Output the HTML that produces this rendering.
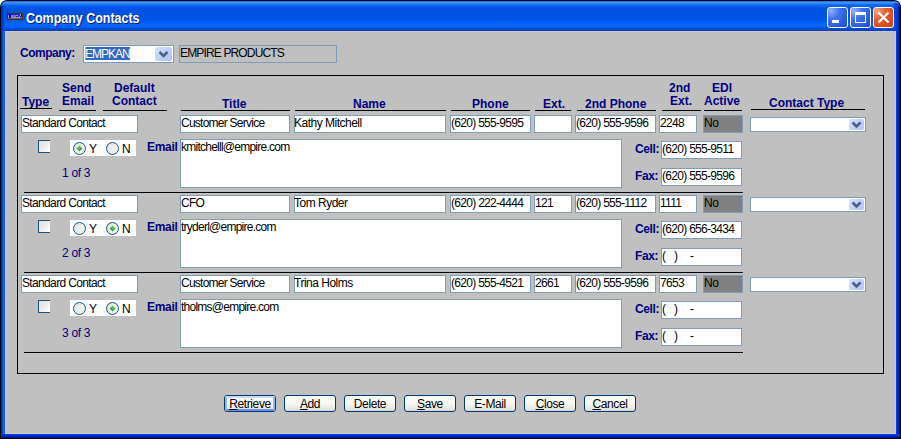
<!DOCTYPE html><html><head><meta charset="utf-8"><style>
html,body{margin:0;padding:0;width:901px;height:439px;overflow:hidden;background:#fff;}
body div, body svg{position:absolute;}
.t{white-space:pre;font-family:'Liberation Sans', sans-serif;}
</style></head><body>
<div style="left:0;top:0;width:901px;height:439px;background:#000;border-radius:7px 7px 0 0;"></div>
<div style="left:1px;top:1px;width:899px;height:437px;background:linear-gradient(90deg,#0A1CD8 0px,#0A1CD8 1px,#0840DC 1px,#0840DC 2px,#1868E8 2px,#1868E8 3px,#0452D8 3px,#0452D8 4px,#0A5AEE 4px,#0A5AEE 895px,#0040F0 895px,#0040F0 896px,#0030D0 896px,#0030D0 897px,#0020A8 897px,#0020A8 898px,#001890 898px);border-radius:6px 6px 0 0;"></div>
<div style="left:1px;top:434px;width:899px;height:4px;background:linear-gradient(180deg,#0040F0 0px,#0040F0 1px,#0030D8 1px,#0030D8 2px,#0020B0 2px,#0020B0 3px,#001890 3px);"></div>
<div style="left:1px;top:434px;width:4px;height:4px;background:linear-gradient(180deg,#0838E0,#0020B0 50%,#001890);"></div>
<div style="left:1px;top:1px;width:899px;height:30px;border-radius:6px 6px 0 0;background:linear-gradient(180deg,#0058EE 0px,#3D95FF 1px,#3A8FFF 2px,#0A68F4 4px,#0054E3 7px,#0052E0 14px,#0058EA 19px,#0066FF 23px,#0061F8 26px,#0048D0 28px,#003CC0 30px);"></div>
<div style="left:1px;top:6px;width:4px;height:25px;background:linear-gradient(90deg,#0820E0 0px,#0820E0 1px,#0038E0 1px,#0038E0 2px,#0048E0 2px,#0048E0 3px,#0050E4 3px);"></div>
<div style="left:894px;top:3px;width:6px;height:28px;background:linear-gradient(90deg,rgba(0,64,228,0.5) 0px,#0038E0 4px,#0028B0 4px,#0028B0 5px,#001890 5px);border-top-right-radius:5px;"></div>
<div style="left:5px;top:31px;width:889px;height:401px;border:1px solid #CEC8BA;background:#C0C0C0"></div>
<svg style="left:7px;top:13px" width="16" height="7" shape-rendering="crispEdges"><rect x="0" y="0" width="16" height="7" fill="#3A3226"/><rect x="1" y="1" width="14" height="5" fill="#A09A8A"/><rect x="1" y="5" width="14" height="1" fill="#6A6456"/><rect x="1" y="1" width="4" height="1" fill="#0000F8"/><rect x="2" y="1" width="2" height="4" fill="#0000F8"/><rect x="5" y="1" width="3" height="1" fill="#2828F0"/><rect x="5" y="2" width="4" height="2" fill="#6868F0"/><rect x="8" y="1" width="3" height="1" fill="#2020F0"/><rect x="9" y="3" width="3" height="1" fill="#2020E8"/><rect x="11" y="1" width="2" height="2" fill="#2020F0"/><rect x="14" y="1" width="1" height="3" fill="#0000F8"/><rect x="13" y="3" width="1" height="2" fill="#2828E8"/></svg>
<div class="t" style="left:27px;top:12px;font-size:14px;line-height:14px;font-weight:bold;color:#0A1E80;transform:scaleX(0.89);transform-origin:0 0;">Company Contacts</div>
<div class="t" style="left:26px;top:11px;font-size:14px;line-height:14px;font-weight:bold;color:#fff;transform:scaleX(0.89);transform-origin:0 0;">Company Contacts</div>
<div style="left:827px;top:7px;width:19px;height:19px;border:1px solid #fff;border-radius:3px;background:radial-gradient(circle at 15% 15%,#90B0FA 0%,#4474EE 35%,#2A5CE6 70%,#1E4AD8 100%);"></div>
<div style="left:850px;top:7px;width:19px;height:19px;border:1px solid #fff;border-radius:3px;background:radial-gradient(circle at 15% 15%,#90B0FA 0%,#4474EE 35%,#2A5CE6 70%,#1E4AD8 100%);"></div>
<div style="left:873px;top:7px;width:19px;height:19px;border:1px solid #fff;border-radius:3px;background:radial-gradient(circle at 15% 15%,#F2A488 0%,#E25E34 40%,#D8491C 75%,#C83A10 100%);"></div>
<div style="left:832px;top:20px;width:7px;height:3px;background:#fff"></div>
<div style="left:855px;top:12px;width:9px;height:7px;border:1px solid #fff;border-top:3px solid #fff;background:transparent"></div>
<svg style="left:873px;top:7px" width="21" height="21"><path d="M5.5,5.5 L15.5,15.5 M15.5,5.5 L5.5,15.5" stroke="#fff" stroke-width="2.2"/></svg>
<div class="t" style="left:20px;top:47px;font-size:12px;line-height:12px;font-weight:bold;color:#000080;letter-spacing:-0.5px;">Company:</div>
<div style="left:83px;top:45px;width:89px;height:16px;border:1px solid #7F9DB9;background:#fff"></div>
<div style="left:85px;top:47px;width:1px;height:13px;background:#E0A030"></div>
<div style="left:86px;top:47px;width:44px;height:13px;background:#316AC5"></div>
<div class="t" style="left:85px;top:48px;font-size:12px;line-height:12px;font-weight:normal;color:#fff;letter-spacing:-1.0px;">EMPKAN</div>
<div style="left:155px;top:47px;width:17px;height:14px;border-radius:2px;background:linear-gradient(135deg,#D4E2FD 0%,#BDD0F9 55%,#AFC5F6 100%);"></div>
<svg style="left:155px;top:47px" width="17" height="14"><path d="M4.5,5.0 L8.5,9.0 L12.5,5.0" fill="none" stroke="#4D6185" stroke-width="2.6"/></svg>
<div style="left:179px;top:45px;width:156px;height:16px;border:1px solid #7F9DB9;background:#C0C0C0"></div>
<div class="t" style="left:180px;top:47px;font-size:12px;line-height:12px;font-weight:normal;color:#000;letter-spacing:-0.85px;">EMPIRE PRODUCTS</div>
<div style="left:17px;top:75px;width:865px;height:297px;border:1px solid #000"></div>
<div class="t" style="left:22px;top:96px;font-size:12px;line-height:12px;font-weight:bold;color:#000080;letter-spacing:0px;">Type</div>
<div style="left:20px;top:108px;width:32px;height:1px;background:#000"></div>
<div class="t" style="left:62px;top:82px;font-size:12px;line-height:12px;font-weight:bold;color:#000080;letter-spacing:0px;">Send</div>
<div class="t" style="left:62px;top:95px;font-size:12px;line-height:12px;font-weight:bold;color:#000080;letter-spacing:0px;">Email</div>
<div style="left:59px;top:110px;width:37px;height:1px;background:#000"></div>
<div class="t" style="left:114px;top:82px;font-size:12px;line-height:12px;font-weight:bold;color:#000080;letter-spacing:0px;">Default</div>
<div class="t" style="left:112px;top:95px;font-size:12px;line-height:12px;font-weight:bold;color:#000080;letter-spacing:0px;">Contact</div>
<div style="left:103px;top:110px;width:64px;height:1px;background:#000"></div>
<div class="t" style="left:222px;top:98px;font-size:12px;line-height:12px;font-weight:bold;color:#000080;letter-spacing:0px;">Title</div>
<div style="left:181px;top:110px;width:109px;height:1px;background:#000"></div>
<div class="t" style="left:353px;top:98px;font-size:12px;line-height:12px;font-weight:bold;color:#000080;letter-spacing:0px;">Name</div>
<div style="left:295px;top:110px;width:151px;height:1px;background:#000"></div>
<div class="t" style="left:472px;top:98px;font-size:12px;line-height:12px;font-weight:bold;color:#000080;letter-spacing:0px;">Phone</div>
<div style="left:451px;top:110px;width:79px;height:1px;background:#000"></div>
<div class="t" style="left:543px;top:98px;font-size:12px;line-height:12px;font-weight:bold;color:#000080;letter-spacing:0px;">Ext.</div>
<div style="left:535px;top:110px;width:36px;height:1px;background:#000"></div>
<div class="t" style="left:585px;top:98px;font-size:12px;line-height:12px;font-weight:bold;color:#000080;letter-spacing:0px;">2nd Phone</div>
<div style="left:577px;top:110px;width:79px;height:1px;background:#000"></div>
<div class="t" style="left:669px;top:82px;font-size:12px;line-height:12px;font-weight:bold;color:#000080;letter-spacing:0px;">2nd</div>
<div class="t" style="left:670px;top:95px;font-size:12px;line-height:12px;font-weight:bold;color:#000080;letter-spacing:0px;">Ext.</div>
<div style="left:662px;top:110px;width:39px;height:1px;background:#000"></div>
<div class="t" style="left:712px;top:82px;font-size:12px;line-height:12px;font-weight:bold;color:#000080;letter-spacing:0px;">EDI</div>
<div class="t" style="left:704px;top:95px;font-size:12px;line-height:12px;font-weight:bold;color:#000080;letter-spacing:0px;">Active</div>
<div style="left:704px;top:110px;width:38px;height:1px;background:#000"></div>
<div class="t" style="left:769px;top:97px;font-size:12px;line-height:12px;font-weight:bold;color:#000080;letter-spacing:0px;">Contact Type</div>
<div style="left:751px;top:109px;width:114px;height:1px;background:#000"></div>
<div style="left:21px;top:115px;width:115px;height:16px;border:1px solid #7F9DB9;background:#fff"></div>
<div class="t" style="left:22px;top:117px;font-size:12px;line-height:12px;font-weight:normal;color:#000;letter-spacing:-0.65px;">Standard Contact</div>
<div style="left:180px;top:115px;width:108px;height:16px;border:1px solid #7F9DB9;background:#fff"></div>
<div class="t" style="left:181px;top:117px;font-size:12px;line-height:12px;font-weight:normal;color:#000;letter-spacing:-0.75px;">Customer Service</div>
<div style="left:294px;top:115px;width:150px;height:16px;border:1px solid #7F9DB9;background:#fff"></div>
<div class="t" style="left:294px;top:117px;font-size:12px;line-height:12px;font-weight:normal;color:#000;letter-spacing:-0.5px;">Kathy Mitchell</div>
<div style="left:450px;top:115px;width:79px;height:16px;border:1px solid #7F9DB9;background:#fff"></div>
<div class="t" style="left:451px;top:117px;font-size:12px;line-height:12px;font-weight:normal;color:#000;letter-spacing:-0.7px;">(620) 555-9595</div>
<div style="left:534px;top:115px;width:36px;height:16px;border:1px solid #7F9DB9;background:#fff"></div>
<div class="t" style="left:535px;top:117px;font-size:12px;line-height:12px;font-weight:normal;color:#000;letter-spacing:-0.7px;"></div>
<div style="left:575px;top:115px;width:79px;height:16px;border:1px solid #7F9DB9;background:#fff"></div>
<div class="t" style="left:576px;top:117px;font-size:12px;line-height:12px;font-weight:normal;color:#000;letter-spacing:-0.7px;">(620) 555-9596</div>
<div style="left:659px;top:115px;width:36px;height:16px;border:1px solid #7F9DB9;background:#fff"></div>
<div class="t" style="left:660px;top:117px;font-size:12px;line-height:12px;font-weight:normal;color:#000;letter-spacing:-0.7px;">2248</div>
<div style="left:703px;top:115px;width:38px;height:16px;border:1px solid #7F9DB9;background:#808080"></div>
<div class="t" style="left:704px;top:117px;font-size:12px;line-height:12px;font-weight:normal;color:#000;letter-spacing:-0.3px;">No</div>
<div style="left:750px;top:117px;width:114px;height:13px;border:1px solid #7F9DB9;background:#fff"></div>
<div style="left:849px;top:119px;width:15px;height:11px;border-radius:2px;background:linear-gradient(135deg,#D4E2FD 0%,#BDD0F9 55%,#AFC5F6 100%);"></div>
<svg style="left:849px;top:119px" width="15" height="11"><path d="M3.5,3.5 L7.5,7.5 L11.5,3.5" fill="none" stroke="#4D6185" stroke-width="2.6"/></svg>
<div style="left:38px;top:140px;width:11px;height:11px;border:1px solid #1C5180;border-right:none;background:linear-gradient(135deg,#DCDCD7,#FFFFFF);"></div>
<div style="left:70px;top:140px;width:66px;height:16px;background:#fff"></div>
<div style="left:73px;top:142px;width:11px;height:11px;border:1px solid #1C5180;border-radius:50%;background:linear-gradient(135deg,#DCDCD7,#FFFFFF);"></div>
<svg style="left:73px;top:142px" width="13" height="13"><path d="M6.5,3.7 L9.3,6.5 L6.5,9.3 L3.7,6.5 Z" fill="#21A421"/><path d="M6.5,4.6 L8,6.1 L6.5,7.6 L5,6.1Z" fill="#5CD85C"/></svg>
<div class="t" style="left:89px;top:143px;font-size:12px;line-height:12px;font-weight:normal;color:#000;letter-spacing:0px;">Y</div>
<div style="left:106px;top:142px;width:11px;height:11px;border:1px solid #1C5180;border-radius:50%;background:linear-gradient(135deg,#DCDCD7,#FFFFFF);"></div>
<div class="t" style="left:122px;top:143px;font-size:12px;line-height:12px;font-weight:normal;color:#000;letter-spacing:0px;">N</div>
<div class="t" style="left:147px;top:141px;font-size:12px;line-height:12px;font-weight:bold;color:#000080;letter-spacing:-0.3px;">Email</div>
<div style="left:180px;top:139px;width:440px;height:47px;border:1px solid #7F9DB9;background:#fff"></div>
<div class="t" style="left:181px;top:141px;font-size:12px;line-height:12px;font-weight:normal;color:#000;letter-spacing:-0.75px;">kmitchelll@empire.com</div>
<div class="t" style="left:62px;top:167px;font-size:12px;line-height:12px;font-weight:normal;color:#000080;letter-spacing:-0.3px;">1 of 3</div>
<div class="t" style="left:635px;top:143px;font-size:12px;line-height:12px;font-weight:bold;color:#000080;letter-spacing:-0.4px;">Cell:</div>
<div style="left:661px;top:141px;width:79px;height:16px;border:1px solid #7F9DB9;background:#fff"></div>
<div class="t" style="left:662px;top:143px;font-size:12px;line-height:12px;font-weight:normal;color:#000;letter-spacing:-0.7px;">(620) 555-9511</div>
<div class="t" style="left:635px;top:170px;font-size:12px;line-height:12px;font-weight:bold;color:#000080;letter-spacing:-0.4px;">Fax:</div>
<div style="left:661px;top:168px;width:79px;height:16px;border:1px solid #7F9DB9;background:#fff"></div>
<div class="t" style="left:662px;top:170px;font-size:12px;line-height:12px;font-weight:normal;color:#000;letter-spacing:-0.7px;">(620) 555-9596</div>
<div style="left:24px;top:192px;width:719px;height:1px;background:#000"></div>
<div style="left:21px;top:195px;width:115px;height:16px;border:1px solid #7F9DB9;background:#fff"></div>
<div class="t" style="left:22px;top:197px;font-size:12px;line-height:12px;font-weight:normal;color:#000;letter-spacing:-0.65px;">Standard Contact</div>
<div style="left:180px;top:195px;width:108px;height:16px;border:1px solid #7F9DB9;background:#fff"></div>
<div class="t" style="left:181px;top:197px;font-size:12px;line-height:12px;font-weight:normal;color:#000;letter-spacing:-0.75px;">CFO</div>
<div style="left:294px;top:195px;width:150px;height:16px;border:1px solid #7F9DB9;background:#fff"></div>
<div class="t" style="left:294px;top:197px;font-size:12px;line-height:12px;font-weight:normal;color:#000;letter-spacing:-0.5px;">Tom Ryder</div>
<div style="left:450px;top:195px;width:79px;height:16px;border:1px solid #7F9DB9;background:#fff"></div>
<div class="t" style="left:451px;top:197px;font-size:12px;line-height:12px;font-weight:normal;color:#000;letter-spacing:-0.7px;">(620) 222-4444</div>
<div style="left:534px;top:195px;width:36px;height:16px;border:1px solid #7F9DB9;background:#fff"></div>
<div class="t" style="left:535px;top:197px;font-size:12px;line-height:12px;font-weight:normal;color:#000;letter-spacing:-0.7px;">121</div>
<div style="left:575px;top:195px;width:79px;height:16px;border:1px solid #7F9DB9;background:#fff"></div>
<div class="t" style="left:576px;top:197px;font-size:12px;line-height:12px;font-weight:normal;color:#000;letter-spacing:-0.7px;">(620) 555-1112</div>
<div style="left:659px;top:195px;width:36px;height:16px;border:1px solid #7F9DB9;background:#fff"></div>
<div class="t" style="left:660px;top:197px;font-size:12px;line-height:12px;font-weight:normal;color:#000;letter-spacing:-0.7px;">1111</div>
<div style="left:703px;top:195px;width:38px;height:16px;border:1px solid #7F9DB9;background:#808080"></div>
<div class="t" style="left:704px;top:197px;font-size:12px;line-height:12px;font-weight:normal;color:#000;letter-spacing:-0.3px;">No</div>
<div style="left:750px;top:197px;width:114px;height:13px;border:1px solid #7F9DB9;background:#fff"></div>
<div style="left:849px;top:199px;width:15px;height:11px;border-radius:2px;background:linear-gradient(135deg,#D4E2FD 0%,#BDD0F9 55%,#AFC5F6 100%);"></div>
<svg style="left:849px;top:199px" width="15" height="11"><path d="M3.5,3.5 L7.5,7.5 L11.5,3.5" fill="none" stroke="#4D6185" stroke-width="2.6"/></svg>
<div style="left:38px;top:220px;width:11px;height:11px;border:1px solid #1C5180;border-right:none;background:linear-gradient(135deg,#DCDCD7,#FFFFFF);"></div>
<div style="left:70px;top:220px;width:66px;height:16px;background:#fff"></div>
<div style="left:73px;top:222px;width:11px;height:11px;border:1px solid #1C5180;border-radius:50%;background:linear-gradient(135deg,#DCDCD7,#FFFFFF);"></div>
<div class="t" style="left:89px;top:223px;font-size:12px;line-height:12px;font-weight:normal;color:#000;letter-spacing:0px;">Y</div>
<div style="left:106px;top:222px;width:11px;height:11px;border:1px solid #1C5180;border-radius:50%;background:linear-gradient(135deg,#DCDCD7,#FFFFFF);"></div>
<svg style="left:106px;top:222px" width="13" height="13"><path d="M6.5,3.7 L9.3,6.5 L6.5,9.3 L3.7,6.5 Z" fill="#21A421"/><path d="M6.5,4.6 L8,6.1 L6.5,7.6 L5,6.1Z" fill="#5CD85C"/></svg>
<div class="t" style="left:122px;top:223px;font-size:12px;line-height:12px;font-weight:normal;color:#000;letter-spacing:0px;">N</div>
<div class="t" style="left:147px;top:221px;font-size:12px;line-height:12px;font-weight:bold;color:#000080;letter-spacing:-0.3px;">Email</div>
<div style="left:180px;top:219px;width:440px;height:47px;border:1px solid #7F9DB9;background:#fff"></div>
<div class="t" style="left:181px;top:221px;font-size:12px;line-height:12px;font-weight:normal;color:#000;letter-spacing:-0.75px;">tryderl@empire.com</div>
<div class="t" style="left:62px;top:247px;font-size:12px;line-height:12px;font-weight:normal;color:#000080;letter-spacing:-0.3px;">2 of 3</div>
<div class="t" style="left:635px;top:223px;font-size:12px;line-height:12px;font-weight:bold;color:#000080;letter-spacing:-0.4px;">Cell:</div>
<div style="left:661px;top:221px;width:79px;height:16px;border:1px solid #7F9DB9;background:#fff"></div>
<div class="t" style="left:662px;top:223px;font-size:12px;line-height:12px;font-weight:normal;color:#000;letter-spacing:-0.7px;">(620) 656-3434</div>
<div class="t" style="left:635px;top:250px;font-size:12px;line-height:12px;font-weight:bold;color:#000080;letter-spacing:-0.4px;">Fax:</div>
<div style="left:661px;top:248px;width:79px;height:16px;border:1px solid #7F9DB9;background:#fff"></div>
<div class="t" style="left:662px;top:250px;font-size:12px;line-height:12px;font-weight:normal;color:#000;letter-spacing:0px;">(</div>
<div class="t" style="left:674px;top:250px;font-size:12px;line-height:12px;font-weight:normal;color:#000;letter-spacing:0px;">)</div>
<div class="t" style="left:690px;top:250px;font-size:12px;line-height:12px;font-weight:normal;color:#000;letter-spacing:0px;">-</div>
<div style="left:24px;top:272px;width:719px;height:1px;background:#000"></div>
<div style="left:21px;top:275px;width:115px;height:16px;border:1px solid #7F9DB9;background:#fff"></div>
<div class="t" style="left:22px;top:277px;font-size:12px;line-height:12px;font-weight:normal;color:#000;letter-spacing:-0.65px;">Standard Contact</div>
<div style="left:180px;top:275px;width:108px;height:16px;border:1px solid #7F9DB9;background:#fff"></div>
<div class="t" style="left:181px;top:277px;font-size:12px;line-height:12px;font-weight:normal;color:#000;letter-spacing:-0.75px;">Customer Service</div>
<div style="left:294px;top:275px;width:150px;height:16px;border:1px solid #7F9DB9;background:#fff"></div>
<div class="t" style="left:294px;top:277px;font-size:12px;line-height:12px;font-weight:normal;color:#000;letter-spacing:-0.5px;">Trina Holms</div>
<div style="left:450px;top:275px;width:79px;height:16px;border:1px solid #7F9DB9;background:#fff"></div>
<div class="t" style="left:451px;top:277px;font-size:12px;line-height:12px;font-weight:normal;color:#000;letter-spacing:-0.7px;">(620) 555-4521</div>
<div style="left:534px;top:275px;width:36px;height:16px;border:1px solid #7F9DB9;background:#fff"></div>
<div class="t" style="left:535px;top:277px;font-size:12px;line-height:12px;font-weight:normal;color:#000;letter-spacing:-0.7px;">2661</div>
<div style="left:575px;top:275px;width:79px;height:16px;border:1px solid #7F9DB9;background:#fff"></div>
<div class="t" style="left:576px;top:277px;font-size:12px;line-height:12px;font-weight:normal;color:#000;letter-spacing:-0.7px;">(620) 555-9596</div>
<div style="left:659px;top:275px;width:36px;height:16px;border:1px solid #7F9DB9;background:#fff"></div>
<div class="t" style="left:660px;top:277px;font-size:12px;line-height:12px;font-weight:normal;color:#000;letter-spacing:-0.7px;">7653</div>
<div style="left:703px;top:275px;width:38px;height:16px;border:1px solid #7F9DB9;background:#808080"></div>
<div class="t" style="left:704px;top:277px;font-size:12px;line-height:12px;font-weight:normal;color:#000;letter-spacing:-0.3px;">No</div>
<div style="left:750px;top:277px;width:114px;height:13px;border:1px solid #7F9DB9;background:#fff"></div>
<div style="left:849px;top:279px;width:15px;height:11px;border-radius:2px;background:linear-gradient(135deg,#D4E2FD 0%,#BDD0F9 55%,#AFC5F6 100%);"></div>
<svg style="left:849px;top:279px" width="15" height="11"><path d="M3.5,3.5 L7.5,7.5 L11.5,3.5" fill="none" stroke="#4D6185" stroke-width="2.6"/></svg>
<div style="left:38px;top:300px;width:11px;height:11px;border:1px solid #1C5180;border-right:none;background:linear-gradient(135deg,#DCDCD7,#FFFFFF);"></div>
<div style="left:70px;top:300px;width:66px;height:16px;background:#fff"></div>
<div style="left:73px;top:302px;width:11px;height:11px;border:1px solid #1C5180;border-radius:50%;background:linear-gradient(135deg,#DCDCD7,#FFFFFF);"></div>
<div class="t" style="left:89px;top:303px;font-size:12px;line-height:12px;font-weight:normal;color:#000;letter-spacing:0px;">Y</div>
<div style="left:106px;top:302px;width:11px;height:11px;border:1px solid #1C5180;border-radius:50%;background:linear-gradient(135deg,#DCDCD7,#FFFFFF);"></div>
<svg style="left:106px;top:302px" width="13" height="13"><path d="M6.5,3.7 L9.3,6.5 L6.5,9.3 L3.7,6.5 Z" fill="#21A421"/><path d="M6.5,4.6 L8,6.1 L6.5,7.6 L5,6.1Z" fill="#5CD85C"/></svg>
<div class="t" style="left:122px;top:303px;font-size:12px;line-height:12px;font-weight:normal;color:#000;letter-spacing:0px;">N</div>
<div class="t" style="left:147px;top:301px;font-size:12px;line-height:12px;font-weight:bold;color:#000080;letter-spacing:-0.3px;">Email</div>
<div style="left:180px;top:299px;width:440px;height:47px;border:1px solid #7F9DB9;background:#fff"></div>
<div class="t" style="left:181px;top:301px;font-size:12px;line-height:12px;font-weight:normal;color:#000;letter-spacing:-0.75px;">tholms@empire.com</div>
<div class="t" style="left:62px;top:327px;font-size:12px;line-height:12px;font-weight:normal;color:#000080;letter-spacing:-0.3px;">3 of 3</div>
<div class="t" style="left:635px;top:303px;font-size:12px;line-height:12px;font-weight:bold;color:#000080;letter-spacing:-0.4px;">Cell:</div>
<div style="left:661px;top:301px;width:79px;height:16px;border:1px solid #7F9DB9;background:#fff"></div>
<div class="t" style="left:662px;top:303px;font-size:12px;line-height:12px;font-weight:normal;color:#000;letter-spacing:0px;">(</div>
<div class="t" style="left:674px;top:303px;font-size:12px;line-height:12px;font-weight:normal;color:#000;letter-spacing:0px;">)</div>
<div class="t" style="left:690px;top:303px;font-size:12px;line-height:12px;font-weight:normal;color:#000;letter-spacing:0px;">-</div>
<div class="t" style="left:635px;top:330px;font-size:12px;line-height:12px;font-weight:bold;color:#000080;letter-spacing:-0.4px;">Fax:</div>
<div style="left:661px;top:328px;width:79px;height:16px;border:1px solid #7F9DB9;background:#fff"></div>
<div class="t" style="left:662px;top:330px;font-size:12px;line-height:12px;font-weight:normal;color:#000;letter-spacing:0px;">(</div>
<div class="t" style="left:674px;top:330px;font-size:12px;line-height:12px;font-weight:normal;color:#000;letter-spacing:0px;">)</div>
<div class="t" style="left:690px;top:330px;font-size:12px;line-height:12px;font-weight:normal;color:#000;letter-spacing:0px;">-</div>
<div style="left:24px;top:352px;width:719px;height:1px;background:#000"></div>
<div style="left:224px;top:395px;width:50px;height:15px;border:1px solid #003C74;border-radius:3px;background:linear-gradient(180deg,#FFFFFF 0%,#F4F4F0 60%,#E6E4DA 90%,#D6D0C5 100%);"></div>
<div style="left:225px;top:396px;width:46px;height:11px;border:2px solid;border-color:#C6DCFA #94B8EE #6A94EA #94B8EE;border-radius:2px;"></div>
<div class="t" style="left:224px;top:398px;width:52px;text-align:center;font-size:12px;line-height:12px;color:#000;letter-spacing:-0.4px;"><u>R</u>etrieve</div>
<div style="left:284px;top:395px;width:50px;height:15px;border:1px solid #003C74;border-radius:3px;background:linear-gradient(180deg,#FFFFFF 0%,#F4F4F0 60%,#E6E4DA 90%,#D6D0C5 100%);"></div>
<div class="t" style="left:284px;top:398px;width:52px;text-align:center;font-size:12px;line-height:12px;color:#000;letter-spacing:-0.4px;"><u>A</u>dd</div>
<div style="left:344px;top:395px;width:50px;height:15px;border:1px solid #003C74;border-radius:3px;background:linear-gradient(180deg,#FFFFFF 0%,#F4F4F0 60%,#E6E4DA 90%,#D6D0C5 100%);"></div>
<div class="t" style="left:344px;top:398px;width:52px;text-align:center;font-size:12px;line-height:12px;color:#000;letter-spacing:-0.4px;">Delete</div>
<div style="left:404px;top:395px;width:50px;height:15px;border:1px solid #003C74;border-radius:3px;background:linear-gradient(180deg,#FFFFFF 0%,#F4F4F0 60%,#E6E4DA 90%,#D6D0C5 100%);"></div>
<div class="t" style="left:404px;top:398px;width:52px;text-align:center;font-size:12px;line-height:12px;color:#000;letter-spacing:-0.4px;"><u>S</u>ave</div>
<div style="left:464px;top:395px;width:50px;height:15px;border:1px solid #003C74;border-radius:3px;background:linear-gradient(180deg,#FFFFFF 0%,#F4F4F0 60%,#E6E4DA 90%,#D6D0C5 100%);"></div>
<div class="t" style="left:464px;top:398px;width:52px;text-align:center;font-size:12px;line-height:12px;color:#000;letter-spacing:-0.4px;">E-Mail</div>
<div style="left:524px;top:395px;width:50px;height:15px;border:1px solid #003C74;border-radius:3px;background:linear-gradient(180deg,#FFFFFF 0%,#F4F4F0 60%,#E6E4DA 90%,#D6D0C5 100%);"></div>
<div class="t" style="left:524px;top:398px;width:52px;text-align:center;font-size:12px;line-height:12px;color:#000;letter-spacing:-0.4px;"><u>C</u>lose</div>
<div style="left:584px;top:395px;width:50px;height:15px;border:1px solid #003C74;border-radius:3px;background:linear-gradient(180deg,#FFFFFF 0%,#F4F4F0 60%,#E6E4DA 90%,#D6D0C5 100%);"></div>
<div class="t" style="left:584px;top:398px;width:52px;text-align:center;font-size:12px;line-height:12px;color:#000;letter-spacing:-0.4px;"><u>C</u>ancel</div>
</body></html>
